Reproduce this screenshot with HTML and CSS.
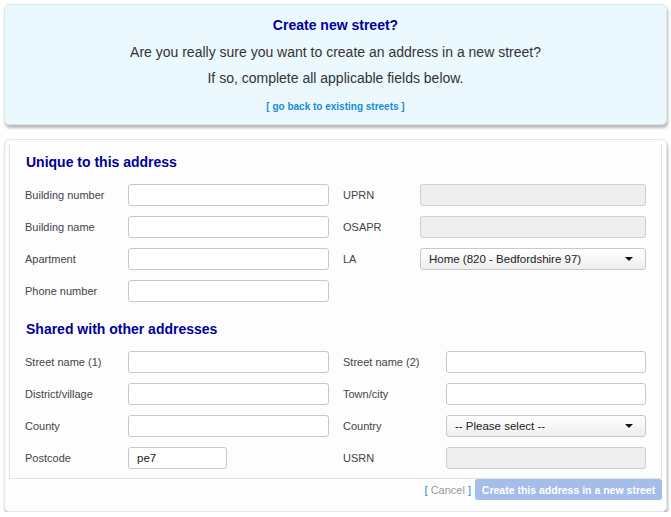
FILE: index.html
```html
<!DOCTYPE html>
<html lang="en">
<head>
<meta charset="utf-8">
<title>Create new street</title>
<link rel="stylesheet" href="styles.css">
</head>
<body>
<div class="notice">
  <h1 class="notice-title">Create new street?</h1>
  <p class="notice-text first">Are you really sure you want to create an address in a new street?</p>
  <p class="notice-text">If so, complete all applicable fields below.</p>
  <p class="notice-link"><a href="#">[ go back to existing streets ]</a></p>
</div>

<div class="panel">
  <div class="fieldset">
    <h2 class="section-title">Unique to this address</h2>
    <div class="rows">
      <div class="row">
        <div class="col left"><span class="label">Building number</span><span class="input"></span></div>
        <div class="col right narrow"><span class="label">UPRN</span><span class="input disabled"></span></div>
      </div>
      <div class="row">
        <div class="col left"><span class="label">Building name</span><span class="input"></span></div>
        <div class="col right narrow"><span class="label">OSAPR</span><span class="input disabled"></span></div>
      </div>
      <div class="row">
        <div class="col left"><span class="label">Apartment</span><span class="input"></span></div>
        <div class="col right narrow"><span class="label">LA</span><span class="input select"><span class="value">Home (820 - Bedfordshire 97)</span><span class="caret"></span></span></div>
      </div>
      <div class="row">
        <div class="col left"><span class="label">Phone number</span><span class="input"></span></div>
      </div>
    </div>

    <h2 class="section-title second">Shared with other addresses</h2>
    <div class="rows">
      <div class="row">
        <div class="col left"><span class="label">Street name (1)</span><span class="input"></span></div>
        <div class="col right"><span class="label">Street name (2)</span><span class="input"></span></div>
      </div>
      <div class="row">
        <div class="col left"><span class="label">District/village</span><span class="input"></span></div>
        <div class="col right"><span class="label">Town/city</span><span class="input"></span></div>
      </div>
      <div class="row">
        <div class="col left"><span class="label">County</span><span class="input"></span></div>
        <div class="col right"><span class="label">Country</span><span class="input select"><span class="value">-- Please select --</span><span class="caret"></span></span></div>
      </div>
      <div class="row">
        <div class="col left"><span class="label">Postcode</span><span class="input short"><span class="value">pe7</span></span></div>
        <div class="col right"><span class="label">USRN</span><span class="input disabled"></span></div>
      </div>
    </div>
  </div>
  <div class="footer">
    <span class="cancel"><span class="br">[</span> Cancel <span class="br">]</span></span>
    <span class="button">Create this address in a new street</span>
  </div>
</div>
</body>
</html>
```

FILE: styles.css
```css
html, body {
  margin: 0;
  padding: 0;
  background: #ffffff;
}
body {
  font-family: "Liberation Sans", Arial, sans-serif;
  color: #333333;
  padding: 4px 4px 0 4px;
}
.notice {
  width: 663px;
  box-sizing: border-box;
  background: #ebf8fe;
  border: 1px solid #dde8ee;
  border-radius: 5px;
  box-shadow: 1px 3px 3px rgba(0, 0, 0, 0.28);
  text-align: center;
  padding: 11px 0 10px 0;
}
.notice-title {
  margin: 0;
  font-size: 14px;
  line-height: 18px;
  font-weight: bold;
  color: #000099;
}
.notice-text {
  margin: 8px 0 0 0;
  font-size: 14px;
  line-height: 18px;
  color: #333333;
}
.notice-text.first {
  margin-top: 9px;
}
.notice-link {
  margin: 13px 0 0 0;
  font-size: 10px;
  line-height: 14px;
}
.notice-link a {
  color: #1a8cd4;
  text-decoration: none;
  font-weight: bold;
}
.panel {
  margin-top: 14px;
  width: 663px;
  box-sizing: border-box;
  background: #fdfdfd;
  border: 1px solid #e6e6e6;
  border-radius: 5px;
  box-shadow: 1px 3px 3px rgba(0, 0, 0, 0.28);
  padding: 4px 4px 11px 4px;
}
.fieldset {
  border: 1px solid #e3e3e3;
  border-top: none;
  padding: 9px 15px 9px 15px;
}
.section-title {
  margin: 0 0 13px 1px;
  font-size: 14px;
  line-height: 18px;
  font-weight: bold;
  color: #000099;
}
.section-title.second {
  margin-top: 18px;
}
.rows {
  display: flex;
  flex-direction: column;
  gap: 10px;
}
.row {
  display: flex;
  gap: 14px;
  height: 22px;
}
.col {
  display: flex;
  align-items: center;
}
.col.left {
  width: 304px;
}
.label {
  font-size: 11px;
  color: #444444;
}
.left .label {
  width: 103px;
}
.right .label {
  width: 103px;
}
.right.narrow .label {
  width: 77px;
}
.input {
  box-sizing: border-box;
  height: 22px;
  width: 201px;
  border: 1px solid #c8c8c8;
  border-radius: 3px;
  background: #ffffff;
  display: flex;
  align-items: center;
  padding: 0 8px;
  font-size: 11.5px;
  color: #222222;
}
.right .input {
  width: 200px;
}
.right.narrow .input {
  width: 226px;
}
.input.short {
  width: 99px;
}
.input.disabled {
  background: #eeeeee;
  border-color: #cfcfcf;
}
.input.select {
  background: linear-gradient(#ffffff, #eeeeee);
  justify-content: space-between;
  padding-right: 12px;
}
.caret {
  width: 0;
  height: 0;
  border-left: 4px solid transparent;
  border-right: 4px solid transparent;
  border-top: 4px solid #111111;
}
.footer {
  display: flex;
  justify-content: flex-end;
  align-items: center;
  gap: 4px;
  margin-top: 0;
}
.cancel {
  font-size: 11px;
  color: #9a9a9a;
}
.cancel .br {
  color: #1a8cd4;
}
.button {
  box-sizing: border-box;
  height: 21px;
  width: 187px;
  background: #a4bde9;
  border-radius: 3px;
  color: #ffffff;
  font-size: 10.5px;
  font-weight: bold;
  display: flex;
  align-items: center;
  justify-content: center;
}
```
